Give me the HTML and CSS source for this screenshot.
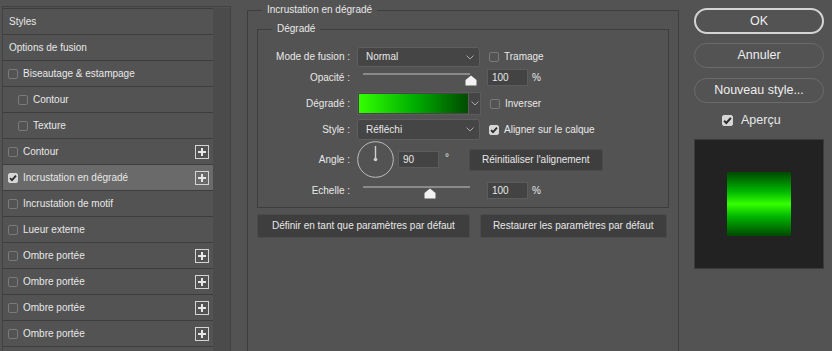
FILE: index.html
```html
<!DOCTYPE html>
<html lang="fr">

<head>
    <meta charset="UTF-8">
    <title>Style de calque</title>
    <link rel="stylesheet" href="styles.css">
</head>

<body>
    <div class="dialog">
        <!-- liste des effets -->
        <div class="sidebar">
            <ul class="effects">
                <li class="effect plain">Styles</li>
                <li class="effect plain">Options de fusion</li>
                <li class="effect"><span class="check"></span>Biseautage &amp; estampage</li>
                <li class="effect sub"><span class="check"></span>Contour</li>
                <li class="effect sub"><span class="check"></span>Texture</li>
                <li class="effect"><span class="check"></span>Contour
                    <svg class="add" width="14" height="14" viewBox="0 0 14 14"><rect x="0.5" y="0.5" width="13" height="13" fill="none" stroke="#d4d4d4"/><path d="M7 3v8M3 7h8" stroke="#e6e6e6" stroke-width="2"/></svg>
                </li>
                <li class="effect active"><span class="check on"><svg width="8" height="8" viewBox="0 0 8 8"><path d="M1 4.2l2 2 4-4.6" fill="none" stroke="#2b2b2b" stroke-width="1.8"/></svg></span>Incrustation en dégradé
                    <svg class="add" width="14" height="14" viewBox="0 0 14 14"><rect x="0.5" y="0.5" width="13" height="13" fill="none" stroke="#d4d4d4"/><path d="M7 3v8M3 7h8" stroke="#e6e6e6" stroke-width="2"/></svg>
                </li>
                <li class="effect"><span class="check"></span>Incrustation de motif</li>
                <li class="effect"><span class="check"></span>Lueur externe</li>
                <li class="effect"><span class="check"></span>Ombre portée
                    <svg class="add" width="14" height="14" viewBox="0 0 14 14"><rect x="0.5" y="0.5" width="13" height="13" fill="none" stroke="#d4d4d4"/><path d="M7 3v8M3 7h8" stroke="#e6e6e6" stroke-width="2"/></svg>
                </li>
                <li class="effect"><span class="check"></span>Ombre portée
                    <svg class="add" width="14" height="14" viewBox="0 0 14 14"><rect x="0.5" y="0.5" width="13" height="13" fill="none" stroke="#d4d4d4"/><path d="M7 3v8M3 7h8" stroke="#e6e6e6" stroke-width="2"/></svg>
                </li>
                <li class="effect"><span class="check"></span>Ombre portée
                    <svg class="add" width="14" height="14" viewBox="0 0 14 14"><rect x="0.5" y="0.5" width="13" height="13" fill="none" stroke="#d4d4d4"/><path d="M7 3v8M3 7h8" stroke="#e6e6e6" stroke-width="2"/></svg>
                </li>
                <li class="effect"><span class="check"></span>Ombre portée
                    <svg class="add" width="14" height="14" viewBox="0 0 14 14"><rect x="0.5" y="0.5" width="13" height="13" fill="none" stroke="#d4d4d4"/><path d="M7 3v8M3 7h8" stroke="#e6e6e6" stroke-width="2"/></svg>
                </li>
            </ul>
            <div class="scroll"></div>
        </div>

        <!-- réglages -->
        <div class="group layer">
            <span class="caption">Incrustation en dégradé</span>
            <div class="group gradient-group">
                <span class="caption">Dégradé</span>

                <div class="field row-mode">
                    <span class="field-label">Mode de fusion :</span>
                    <div class="select">Normal
                        <svg width="8" height="5" viewBox="0 0 8 5"><path d="M0.5 0.5L4 4l3.5-3.5" fill="none" stroke="#a8a8a8"/></svg>
                    </div>
                    <label class="opt"><span class="check"></span>Tramage</label>
                </div>

                <div class="field row-opacity">
                    <span class="field-label">Opacité :</span>
                    <div class="slider">
                        <span class="track"></span>
                        <svg class="thumb" style="left:114px" width="12" height="11" viewBox="0 0 12 11"><path d="M6 0.5L11.5 5v5.5h-11V5z" fill="#f2f2f2"/></svg>
                    </div>
                    <span class="num">100</span><span class="unit">%</span>
                </div>

                <div class="field row-gradient">
                    <span class="field-label">Dégradé :</span>
                    <div class="picker">
                        <span class="swatch"></span>
                        <span class="picker-arrow"><svg width="8" height="5" viewBox="0 0 8 5"><path d="M0.5 0.5L4 4l3.5-3.5" fill="none" stroke="#a8a8a8"/></svg></span>
                    </div>
                    <label class="opt"><span class="check"></span>Inverser</label>
                </div>

                <div class="field row-style">
                    <span class="field-label">Style :</span>
                    <div class="select">Réfléchi
                        <svg width="8" height="5" viewBox="0 0 8 5"><path d="M0.5 0.5L4 4l3.5-3.5" fill="none" stroke="#a8a8a8"/></svg>
                    </div>
                    <label class="opt"><span class="check on"><svg width="8" height="8" viewBox="0 0 8 8"><path d="M1 4.2l2 2 4-4.6" fill="none" stroke="#2b2b2b" stroke-width="1.8"/></svg></span>Aligner sur le calque</label>
                </div>

                <div class="field row-angle">
                    <span class="field-label">Angle :</span>
                    <svg class="dial" width="37" height="37" viewBox="0 0 37 37">
                        <circle cx="18.5" cy="18.5" r="17.8" fill="none" stroke="#bdbdbd"/>
                        <path d="M18.5 18.5V5" stroke="#cfcfcf" stroke-width="1.4"/>
                        <circle cx="18.5" cy="18.5" r="1.8" fill="#cfcfcf"/>
                    </svg>
                    <span class="num angle-num">90</span><span class="degree">°</span>
                    <button class="btn reset">Réinitialiser l'alignement</button>
                </div>

                <div class="field row-scale">
                    <span class="field-label">Echelle :</span>
                    <div class="slider">
                        <span class="track"></span>
                        <svg class="thumb" style="left:73px" width="12" height="11" viewBox="0 0 12 11"><path d="M6 0.5L11.5 5v5.5h-11V5z" fill="#f2f2f2"/></svg>
                    </div>
                    <span class="num">100</span><span class="unit">%</span>
                </div>
            </div>

            <div class="defaults">
                <button class="btn">Définir en tant que paramètres par défaut</button>
                <button class="btn">Restaurer les paramètres par défaut</button>
            </div>
        </div>

        <!-- boutons -->
        <div class="actions">
            <button class="pill primary">OK</button>
            <button class="pill">Annuler</button>
            <button class="pill">Nouveau style...</button>
            <label class="preview-toggle"><span class="check big on"><svg width="9" height="9" viewBox="0 0 8 8"><path d="M1 4.2l2 2 4-4.6" fill="none" stroke="#2b2b2b" stroke-width="1.8"/></svg></span>Aperçu</label>
            <div class="preview">
                <div class="preview-square"></div>
            </div>
        </div>
    </div>
</body>

</html>
```

FILE: styles.css
```css
* {
    box-sizing: border-box;
}
html,body {
    margin: 0;
    padding: 0;
}
body {
    height: 351px;
    overflow: hidden;
    background-color: #535353;
    color: #e8e8e8;
    font: 10px/12px "Liberation Sans", Arial, sans-serif;
}
button {
    font: inherit;
    color: inherit;
    margin: 0;
}
.dialog {
    display: flex;
    align-items: flex-start;
}

/* liste des effets */
.sidebar {
    display: flex;
    width: 229px;
    height: 345px;
    margin: 6px 0 0 2px;
    border: 1px solid #424242;
    border-bottom: none;
    overflow: hidden;
}
.effects {
    list-style: none;
    margin: 1px 0 0;
    padding: 0;
    width: 210px;
    border-top: 1px solid #3d3d3d;
}
.effect {
    display: flex;
    align-items: center;
    height: 26px;
    padding-left: 5px;
    border-bottom: 1px solid #3d3d3d;
}
.effect.plain {
    padding-left: 6px;
}
.effect.sub {
    padding-left: 15px;
}
.effect.active {
    background-color: #6a6a6a;
}
.effect .check {
    margin-right: 5px;
}
.add {
    margin-left: auto;
    margin-right: 4px;
}
.scroll {
    flex: 1;
    align-self: stretch;
    margin-top: 1px;
    background-color: #4b4b4b;
}

.check {
    display: inline-flex;
    align-items: center;
    justify-content: center;
    flex: none;
    width: 10px;
    height: 10px;
    border: 1px solid #7a7a7a;
    border-radius: 2px;
}
.check.on {
    background-color: #d6d6d6;
    border-color: #d6d6d6;
}
.check.big {
    width: 11px;
    height: 11px;
}

/* cadres */
.group {
    position: relative;
    border: 1px solid #3d3d3d;
}
.caption {
    position: absolute;
    top: -7px;
    left: 14px;
    padding: 0 5px;
    background-color: #535353;
    line-height: 12px;
}
.layer {
    width: 432px;
    height: 341px;
    margin: 10px 0 0 16px;
    padding: 18px 9px 0;
    border-bottom: none;
}
.gradient-group {
    padding: 17px 0 8px;
}

.field {
    display: flex;
    align-items: center;
}
.field-label {
    flex: none;
    width: 92px;
    margin-right: 7px;
    text-align: right;
}
.row-mode {
    height: 20px;
}
.row-opacity {
    height: 17px;
    margin-top: 2px;
}
.row-gradient {
    height: 23px;
    margin-top: 6px;
}
.row-style {
    height: 21px;
    margin-top: 4px;
}
.row-angle {
    height: 37px;
    margin-top: 1px;
}
.row-scale {
    height: 17px;
    margin-top: 4px;
}

.select {
    display: flex;
    align-items: center;
    justify-content: space-between;
    width: 123px;
    height: 100%;
    padding: 0 5px 0 8px;
    border: 1px solid #5e5e5e;
    border-radius: 3px;
    background-color: #454545;
}
.opt {
    display: flex;
    align-items: center;
    margin-left: 9px;
}
.opt .check {
    margin-right: 5px;
}

.slider {
    position: relative;
    width: 123px;
    height: 17px;
}
.track {
    position: absolute;
    left: 6px;
    right: 10px;
    top: 4px;
    height: 2px;
    background-color: #8a8a8a;
}
.thumb {
    position: absolute;
    top: 6px;
    margin-left: -6px;
}
.num {
    display: flex;
    align-items: center;
    width: 41px;
    height: 17px;
    margin-left: 7px;
    padding-left: 4px;
    border: 1px solid #5c5c5c;
    background-color: #434343;
}
.unit {
    margin-left: 4px;
}

.picker {
    display: flex;
    width: 124px;
    height: 23px;
    border: 1px solid #5c5c5c;
    background-color: #454545;
}
.swatch {
    width: 109px;
    margin: 1px 0 1px 1px;
    background: linear-gradient(90deg, #33ff00, #00b000 50%, #004c00);
}
.picker-arrow {
    display: flex;
    flex: 1;
    align-items: center;
    justify-content: center;
    border-left: 1px solid #5c5c5c;
}

.dial {
    flex: none;
}
.angle-num {
    margin-left: 4px;
}
.degree {
    margin: -4px 0 0 6px;
}
.btn {
    height: 23px;
    padding: 0 13px;
    border: 1px solid #4b4b4b;
    border-radius: 2px;
    background-color: #3e3e3e;
    white-space: nowrap;
}
.reset {
    margin-left: 20px;
    height: 22px;
    padding: 0 12px;
}
.defaults {
    display: flex;
    gap: 10px;
    margin-top: 6px;
}
.defaults .btn {
    height: 24px;
    padding: 0 14px;
}
.defaults .btn:last-child {
    padding: 0 12px;
}

/* colonne de droite */
.actions {
    display: flex;
    flex-direction: column;
    width: 130px;
    margin: 8px 0 0 15px;
    font-size: 12.5px;
    line-height: 15px;
}
.pill {
    height: 25px;
    margin-bottom: 10px;
    border: 1px solid #6b6b6b;
    border-radius: 13px;
    background: transparent;
    color: #eeeeee;
    padding: 0;
}
.pill.primary {
    height: 26px;
    margin-bottom: 9px;
    border: 2px solid #d4d4d4;
}
.preview-toggle {
    display: flex;
    align-items: center;
    height: 12px;
    margin-top: 1px;
    padding-left: 28px;
}
.preview-toggle .check {
    margin-right: 8px;
}
.preview {
    display: flex;
    align-items: center;
    justify-content: center;
    height: 130px;
    margin-top: 13px;
    border: 1px solid #3b3b3b;
    background-color: #222222;
}
.preview-square {
    width: 64px;
    height: 64px;
    background: linear-gradient(180deg, #004800, #00b400 30%, #33ff00 50%, #00b400 70%, #004800);
}
```
